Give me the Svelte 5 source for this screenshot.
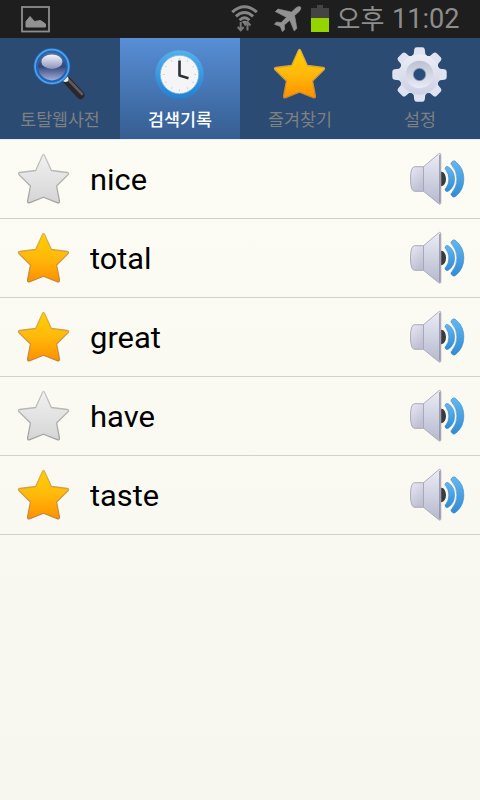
<script>
  const tabs = [
    { icon: 'search', label: '토탈웹사전' },
    { icon: 'clock', label: '검색기록', active: true },
    { icon: 'star', label: '즐겨찾기' },
    { icon: 'gear', label: '설정' }
  ];
  const words = [
    { text: 'nice', width: 57, starred: false },
    { text: 'total', width: 61.5, starred: true },
    { text: 'great', width: 71, starred: true },
    { text: 'have', width: 65, starred: false },
    { text: 'taste', width: 69, starred: true }
  ];
  const star = 'M28.3 4.5Q29.5 2 30.7 4.5L37.6 19.4L54 21.4Q56.3 21.9 54.7 23.7L43 35L45.9 50Q46 52.7 43.6 51.6L29.5 46.3L15.4 51.6Q13 52.7 13.1 50L16 35L4.3 23.7Q2.7 21.9 5 21.4L21.4 19.4Z';
  const angles = [0, 45, 90, 135, 180, 225, 270, 315];
  const ticks = Array.from({ length: 12 }, (_, i) => i * 30);
</script>

<svg class="defs" width="0" height="0" aria-hidden="true">
  <defs>
    <linearGradient id="gold" x1="0" y1="0" x2="0" y2="1"><stop offset="0" stop-color="#ffd000"/><stop offset=".5" stop-color="#ffb90a"/><stop offset="1" stop-color="#ff9000"/></linearGradient>
    <linearGradient id="silver" x1="0" y1="0" x2="0" y2="1"><stop offset="0" stop-color="#f1f1f1"/><stop offset="1" stop-color="#d5d5d5"/></linearGradient>
    <linearGradient id="goldEdge" x1="0" y1="0" x2="0" y2="1"><stop offset="0" stop-color="#dfb04c"/><stop offset="1" stop-color="#c58435"/></linearGradient>
    <linearGradient id="silverEdge" x1="0" y1="0" x2="0" y2="1"><stop offset="0" stop-color="#c4c4c1"/><stop offset="1" stop-color="#a0a09e"/></linearGradient>
    <linearGradient id="metal" x1="0" y1="0" x2="0" y2="1"><stop offset="0" stop-color="#ececf5"/><stop offset="1" stop-color="#b6b9cf"/></linearGradient>
    <linearGradient id="cone" x1="0" y1="0" x2=".5" y2="1"><stop offset="0" stop-color="#e8e8f4"/><stop offset="1" stop-color="#bfc0d2"/></linearGradient>
    <linearGradient id="wave" x1="0" y1="0" x2="0" y2="1"><stop offset="0" stop-color="#63b7ef"/><stop offset="1" stop-color="#2f8cd6"/></linearGradient>
    <linearGradient id="rim" x1="0" y1="0" x2="0" y2="1"><stop offset="0" stop-color="#55b0ec"/><stop offset="1" stop-color="#247fcf"/></linearGradient>
    <linearGradient id="gearTeeth" gradientUnits="userSpaceOnUse" x1="0" y1="-27" x2="0" y2="27"><stop offset="0" stop-color="#f2f3f8"/><stop offset="1" stop-color="#c8cbe3"/></linearGradient>
    <linearGradient id="dish" x1="0" y1="0" x2="0" y2="1"><stop offset="0" stop-color="#bcc2d2"/><stop offset="1" stop-color="#e9ebf5"/></linearGradient>
    <linearGradient id="glass" x1="0" y1="0" x2="0" y2="1"><stop offset="0" stop-color="#6577a0"/><stop offset=".5" stop-color="#33497a"/><stop offset="1" stop-color="#b4bdea"/></linearGradient>
    <linearGradient id="shine" x1="0" y1="0" x2="0" y2="1"><stop offset="0" stop-color="#f5f6fb"/><stop offset="1" stop-color="#8793ba"/></linearGradient>
  </defs>
</svg>

{#snippet starIcon(on)}
  <svg class="star" viewBox="0 0 60 56" width="60" height="56">
    <path d={star} fill={on ? 'url(#gold)' : 'url(#silver)'} stroke={on ? 'url(#goldEdge)' : 'url(#silverEdge)'} stroke-width="1.3" stroke-linejoin="round" transform="translate(.9 .2) scale(.97 .995)"/>
  </svg>
{/snippet}

<div class="screen">
  <header class="status">
    <svg class="photo" width="29" height="27" viewBox="0 0 29 27">
      <rect x="1" y="1" width="27" height="24.5" fill="none" stroke="#8d8d8d" stroke-width="1.8"/>
      <path d="M5 21V15.5L9 10.5L13.5 15.5L19.5 14.5L24.5 18V21Z" fill="#929292" stroke="#929292" stroke-linejoin="round"/>
    </svg>
    <div class="right">
      <svg class="wifi" width="28" height="29" viewBox="0 0 28 29">
        <g fill="none" stroke="#858585" stroke-width="3"><path d="M1.2 8.2Q13.5-2.8 25.8 8.2"/><path d="M4.9 12.3Q13.5 4.6 22.1 12.3"/><path d="M8.6 16.2Q13.5 11.3 18.4 16.2"/></g>
        <path d="M10.7 17.8Q13.5 15.8 16.3 17.8L13.5 20.5Z" fill="#858585"/>
        <path d="M9.7 18V25M6.7 23L9.7 26.3L12.7 23M16.5 26.5V19M13.5 21.5L16.5 18L19.5 21.5" fill="none" stroke="#777" stroke-width="2"/>
      </svg>
      <svg class="plane" width="28" height="26" viewBox="0 0 28 26">
        <path d="M26.7 1.1Q24.5-.5 21.8 2L17.5 6L4 3L1.3 5.6L12.4 11.3L7.2 16.6L2.5 16L.3 18.2L6.2 20.4L8.4 25.7L10.7 23.5L10.3 19L15.8 14.2L20.2 25L22.9 22.4L20.6 9.5L25.2 5.4Q27.5 3 26.7 1.1Z" fill="#929292" stroke="#929292" stroke-width=".6"/>
      </svg>
      <svg class="battery" width="18" height="27" viewBox="0 0 18 27">
        <path d="M0 3H6V0H12V3H18V13H0Z" fill="#444"/><path d="M0 13H18V27H0Z" fill="#94d500"/>
      </svg>
      <svg class="time" width="126" height="38" viewBox="0 0 126 38">
        <text x="-.5" y="28.5" textLength="48" lengthAdjust="spacingAndGlyphs">오후</text>
        <text x="55" y="28" textLength="67.5" lengthAdjust="spacingAndGlyphs">11:02</text>
      </svg>
    </div>
  </header>

  <nav>
    {#each tabs as tab}
      <div class="tab" class:active={tab.active}>
        {#if tab.icon === 'star'}
          {@render starIcon(true)}
        {:else}
          <svg width="60" height="56" viewBox="0 0 60 56">
            {#if tab.icon === 'search'}
              <path d="M37 34.5L50.5 49" stroke="#29272a" stroke-width="8" stroke-linecap="round"/>
              <path d="M38.5 33.8L52 48" stroke="#625b5b" stroke-width="2.6" stroke-linecap="round"/>
              <circle cx="35.5" cy="33" r="3" fill="#e3eee9"/>
              <circle cx="21.9" cy="20.5" r="16.2" fill="url(#glass)" stroke="#1e64b8" stroke-width="4.6"/>
              <circle cx="21.9" cy="20.5" r="16.8" fill="none" stroke="#52a1e3" stroke-width="1.7"/>
              <ellipse cx="21.9" cy="15.7" rx="10.5" ry="7.2" fill="url(#shine)"/>
            {:else if tab.icon === 'clock'}
              <circle cx="29.5" cy="28.5" r="24.3" fill="url(#rim)"/>
              <circle cx="29.5" cy="28.5" r="19.2" fill="#f5f5f7" stroke="#64b9ec" stroke-width=".8"/>
              {#each ticks as a}
                <path d="M29.5 12.2V13.4" stroke="#c5beba" stroke-width="1" transform={`rotate(${a} 29.5 28.5)`}/>
              {/each}
              <path d="M29.5 14.5V29.6L38.5 32.2" fill="none" stroke="#29313a" stroke-width="2.6" stroke-linejoin="round"/>
            {:else}
              <g transform="translate(29.5 28.5)">
                {#each angles as a}
                  <path class="tooth" d="M-9-17L-5.8-20.5L-5.3-25Q-5-27.2-2.8-27.2H2.8Q5-27.2 5.3-25L5.8-20.5L9-17Z" transform={`rotate(${a})`}/>
                {/each}
                <circle r="20.3" fill="url(#gearTeeth)"/>
                <circle r="13.8" fill="url(#dish)"/>
                <circle r="6.2" fill="#294d7b" stroke="#969db5" stroke-width=".8"/>
              </g>
            {/if}
          </svg>
        {/if}
        <svg class="label" width="120" height="24" viewBox="0 0 120 24">
          <text x="60" y="16.5" text-anchor="middle" textLength={tab.label.length === 5 ? 79.5 : tab.label.length * 16} lengthAdjust="spacingAndGlyphs">{tab.label}</text>
        </svg>
      </div>
    {/each}
  </nav>

  <main>
    {#each words as word}
      <div class="row">
        {@render starIcon(word.starred)}
        <svg class="word" width="200" height="50" viewBox="0 0 200 50">
          <text x="0" y="36" textLength={word.width} lengthAdjust="spacingAndGlyphs">{word.text}</text>
        </svg>
        <svg class="speaker" width="56" height="56" viewBox="0 0 56 56">
          <ellipse cx="32.5" cy="28" rx="4.5" ry="7.2" fill="#3a3b42"/>
          <path d="M14.5 15.7H5.5Q1.5 16 1.5 28T5.5 40.3H14.5Z" fill="url(#cone)" stroke="#a3a3b5" stroke-width=".9"/>
          <path d="M14.5 15.7L29.5 3Q31.8 1.2 31.8 4V51.5Q31.8 54.3 29.5 52.5L14.5 40.3Z" fill="url(#metal)" stroke="#a5a5b7" stroke-width=".9"/>
          <path d="M30.8 4V51.8" stroke="#8f8f9f" stroke-width="1.2"/>
          <path d="M36 17.1Q37 14.2 39.7 16Q45.6 20.2 45.6 28T39.7 40Q37 41.8 36 38.9Q35.7 37.8 37 36.8Q39.8 33 39.8 28T37 19.2Q35.7 18.2 36 17.1Z" fill="url(#wave)" stroke="#3883bf" stroke-width=".5"/>
          <path d="M42 12Q44.3 8.3 47.2 11Q54.9 17.5 54.9 28T47.2 45Q44.3 47.7 42 44Q41.5 42.8 43 41.5Q47.9 35.5 47.9 28T43 14.5Q41.5 13.2 42 12Z" fill="url(#wave)" stroke="#3883bf" stroke-width=".5"/>
        </svg>
      </div>
    {/each}
  </main>
</div>

<style>
  :global(body) { margin: 0; }
  .defs { position: absolute; }
  .screen { width: 480px; height: 800px; overflow: hidden; display: flex; flex-direction: column; background: linear-gradient(#fdfcf4 139px, #f7f7ef); font-family: Roboto, "Noto Sans CJK KR", sans-serif; }
  svg { display: block; flex: none; }
  .status { height: 38px; flex: none; background: #1e1e1e; display: flex; justify-content: space-between; padding-left: 21px; box-sizing: border-box; }
  .photo { margin-top: 6px; }
  .right { display: flex; align-items: flex-start; width: 249px; }
  .wifi { margin-top: 4px; }
  .plane { margin: 6px 0 0 15px; }
  .battery { margin: 5px 0 0 9px; }
  .time { margin-left: 8px; overflow: visible; }
  .time text { font-size: 27px; font-weight: 400; fill: #8d8d8d; }
  nav { height: 101px; flex: none; display: flex; background: #2b4b73; border-bottom: 1px solid #e9edf2; }
  .tab { width: 120px; box-sizing: border-box; padding-top: 8px; display: flex; flex-direction: column; align-items: center; }
  .tab.active { background: linear-gradient(#588fd6, #355d91); }
  .tooth { fill: #dfe2f0; }
  .label { margin-top: 7px; }
  .label text { font-size: 17px; fill: #7e8081; font-weight: 400; }
  .active .label text { fill: #fff; font-weight: 500; }
  .row { height: 79px; border-bottom: 1px solid #d1d1cc; box-sizing: border-box; display: flex; align-items: center; padding-left: 14px; }
  .row .star { margin-top: -1px; }
  .word { margin-left: 16px; }
  .word text { font-size: 30px; fill: #000; }
  .speaker { margin: 0 0 0 119px; }
</style>
